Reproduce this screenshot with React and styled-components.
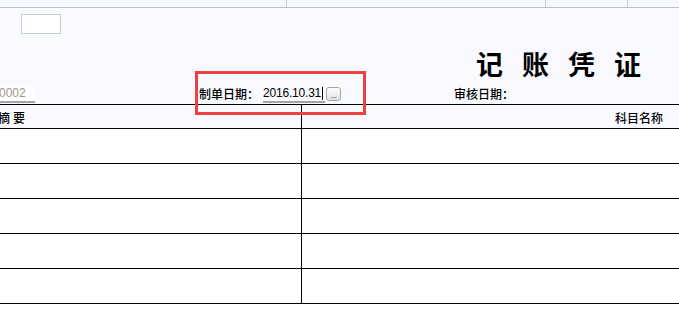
import React from "react";
import styled, { createGlobalStyle } from "styled-components";

const Global = createGlobalStyle`
  html, body { margin: 0; padding: 0; background: #ffffff; overflow: hidden; }
  * { box-sizing: border-box; }
`;

const Page = styled.div`
  position: relative;
  width: 679px;
  height: 319px;
  overflow: hidden;
  background: #ffffff;
  font-family: "Noto Sans CJK SC", "Liberation Sans", sans-serif;
  color: #000;
`;

const TopBar = styled.div`
  display: flex;
  height: 8px;
  background: #f5f8fc;
  border-bottom: 1px solid #b6c2cc;
`;

const TabCell = styled.div`
  flex: ${(p) => (p.$w ? `0 0 ${p.$w}px` : "1 1 auto")};
  height: 7px;
  border-right: ${(p) => (p.$w ? "1px solid #c2cad2" : "none")};
`;

const Header = styled.div`
  display: flex;
  flex-direction: column;
  height: 96px;
  padding-top: 6px;
  background: #f8faff;
`;

const SmallBox = styled.div`
  margin-left: 21px;
  width: 40px;
  height: 20px;
  background: #ffffff;
  border: 1px solid #c6cad2;
`;

const Title = styled.div`
  margin-top: 16px;
  padding-left: 476px;
  font-size: 27px;
  line-height: 27px;
  font-weight: 700;
  letter-spacing: 19px;
  white-space: nowrap;
`;

const InfoRow = styled.div`
  margin-top: auto;
  display: flex;
  align-items: flex-end;
  height: 17px;
  padding-bottom: 1px;
  font-size: 12px;
`;

const NumberField = styled.div`
  width: 36px;
  height: 16px;
  background: #ffffff;
  border-bottom: 2px solid #a3a3a3;
  font-family: "Liberation Sans", sans-serif;
  font-size: 12px;
  line-height: 13px;
  color: #9d968a;
  margin-left: -1px;
  white-space: nowrap;
`;

const Label = styled.div`
  margin-left: ${(p) => p.$ml}px;
  line-height: 14px;
  padding-bottom: 2px;
  font-weight: 500;
  white-space: nowrap;
`;

const DateField = styled.div`
  display: flex;
  align-items: flex-start;
  margin-left: 4px;
  width: 62px;
  height: 16px;
  border-bottom: 2px solid #a3a3a3;
  font-family: "Liberation Sans", sans-serif;
  font-size: 12px;
  line-height: 13px;
  white-space: nowrap;
`;

const DateText = styled.span`
  letter-spacing: -0.2px;
`;

const Caret = styled.span`
  display: inline-block;
  width: 1px;
  height: 13px;
  margin-left: 1px;
  background: #000;
`;

const MoreButton = styled.div`
  align-self: flex-start;
  margin-left: 1px;
  width: 15px;
  height: 14px;
  border: 1px solid #a6a6a6;
  border-radius: 3px;
  background: linear-gradient(#fdfdfd, #e4e4e4);
  display: flex;
  align-items: flex-end;
  justify-content: center;
  font-family: "Liberation Sans", sans-serif;
  font-size: 9px;
  line-height: 9px;
  color: #1c3c8c;
  letter-spacing: -0.5px;
`;

const Table = styled.div`
  border-top: 1px solid #000;
`;

const Row = styled.div`
  display: flex;
  height: ${(p) => (p.$head ? 24 : 35)}px;
  border-bottom: 1px solid #000;
  background: ${(p) => (p.$head ? "#f8faff" : "#ffffff")};
`;

const LeftCell = styled.div`
  flex: 0 0 302px;
  border-right: 1px solid #000;
  display: flex;
  align-items: flex-end;
  padding-bottom: 3px;
  font-size: 12px;
  line-height: 14px;
`;

const RightCell = styled.div`
  flex: 1 1 auto;
  display: flex;
  align-items: flex-end;
  justify-content: flex-end;
  padding-right: 16px;
  padding-bottom: 3px;
  font-size: 12px;
  line-height: 14px;
`;

const HeadText = styled.span`
  margin-left: ${(p) => p.$ml || 0}px;
  letter-spacing: ${(p) => p.$ls || 0}px;
  font-weight: 500;
  white-space: nowrap;
`;

const Highlight = styled.div`
  position: absolute;
  left: 195px;
  top: 71px;
  width: 171px;
  height: 44px;
  border: 3px solid #ef4141;
  pointer-events: none;
`;

export default function App() {
  const rows = [0, 1, 2, 3, 4];
  return (
    <Page>
      <Global />
      <TopBar>
        <TabCell $w={287} />
        <TabCell $w={259} />
        <TabCell $w={82} />
        <TabCell />
      </TopBar>
      <Header>
        <SmallBox />
        <Title>记账凭证</Title>
        <InfoRow>
          <NumberField>0002</NumberField>
          <Label $ml={164}>制单日期：</Label>
          <DateField>
            <DateText>2016.10.31</DateText>
            <Caret />
          </DateField>
          <MoreButton>...</MoreButton>
          <Label $ml={113}>审核日期：</Label>
        </InfoRow>
      </Header>
      <Table>
        <Row $head>
          <LeftCell>
            <HeadText $ml={-2} $ls={3}>摘要</HeadText>
          </LeftCell>
          <RightCell>
            <HeadText>科目名称</HeadText>
          </RightCell>
        </Row>
        {rows.map((r) => (
          <Row key={r}>
            <LeftCell />
            <RightCell />
          </Row>
        ))}
      </Table>
      <Highlight />
    </Page>
  );
}
